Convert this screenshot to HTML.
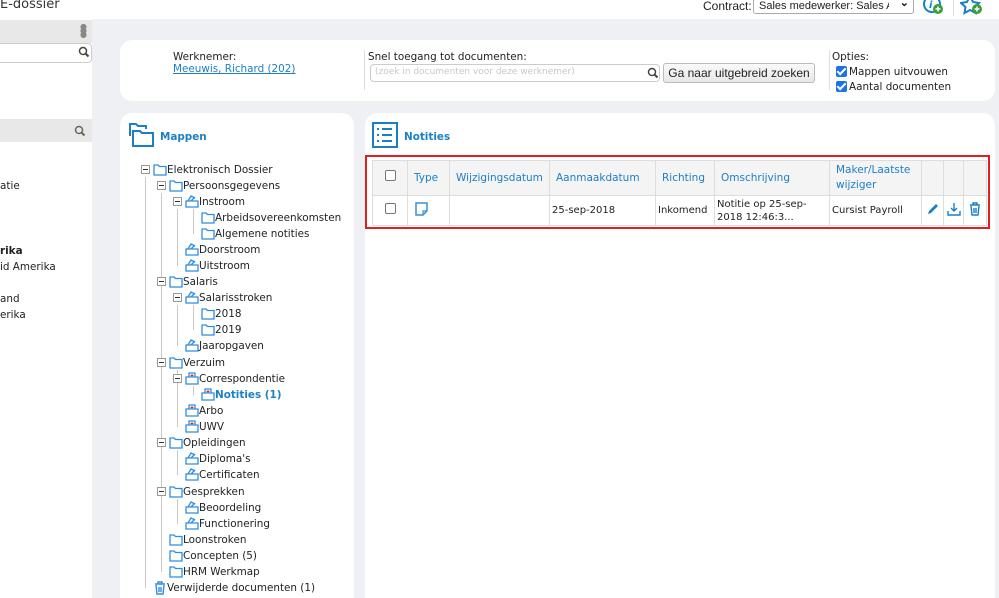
<!DOCTYPE html><html><head><meta charset="utf-8"><style>
*{margin:0;padding:0;box-sizing:border-box}
html,body{width:999px;height:598px;overflow:hidden}
body{background:#eef0f3;font-family:"DejaVu Sans",Verdana,sans-serif;font-size:10.4px;color:#222;position:relative}
.a{position:absolute;white-space:nowrap}
.top{left:0;top:0;width:999px;height:19px;background:#fff}
.side{left:0;top:19px;width:92px;height:579px;background:#fff}
.panel{background:#fff;border-radius:12px}
.t{position:absolute;white-space:nowrap;line-height:14px;margin-top:1px}
.tl{position:absolute;background:#c8c8c8}
.pm{position:absolute;width:9px;height:9px;border:1px solid #999;background:#fff}
.pm:after{content:"";position:absolute;left:1px;top:3px;width:5px;height:1px;background:#333}
table{border-collapse:collapse;table-layout:fixed}
td,th{border:1px solid #ddd;font-weight:normal;overflow:hidden}
th{color:#1b7fc6;background:#f4f4f4;font-size:10.5px;text-align:left;padding:0 6px;line-height:15px}
td{font-size:10px;padding:0 2px;line-height:13px}
.cb{display:inline-block;width:11px;height:11px;border:1px solid #777;border-radius:2px;background:#fff}
.ck{position:absolute;width:11px;height:11px;background:#1a73e8;border-radius:2px}
.ck:after{content:"";position:absolute;left:3px;top:0px;width:3px;height:7px;border:solid #fff;border-width:0 2px 2px 0;transform:rotate(45deg)}
</style></head><body>
<div class="a top"></div>
<div class="a" style="left:0;top:-3px;font-size:13px;color:#333">E-dossier</div>
<div class="a" style="left:703px;top:-1px;font-family:'Liberation Sans',sans-serif;font-size:12px">Contract:</div>
<div class="a" style="left:753px;top:-6px;width:161px;height:20px;border:1px solid #aaa;border-radius:3px;background:#fff;font-family:'Liberation Sans',sans-serif;font-size:11px;padding:5px 5px;overflow:hidden"><span style="display:inline-block;width:130px;overflow:hidden">Sales medewerker: Sales Azië &amp;</span><span style="position:absolute;right:4px;top:1px;font-weight:bold;background:#fff">&#8964;</span></div>
<svg class="a" style="left:922px;top:-4px" width="22" height="20"><circle cx="10" cy="8" r="8" fill="none" stroke="#1b7fc6" stroke-width="2"/><text x="7" y="12" font-size="10" font-style="italic" font-weight="bold" fill="#1b7fc6">i</text><circle cx="16" cy="13" r="5" fill="#3a9d3a"/><path d="M13.5 13h5M16 10.5v5" stroke="#fff" stroke-width="1.5"/></svg>
<div class="a" style="left:953px;top:0;width:1px;height:16px;background:#ddd"></div>
<svg class="a" style="left:960px;top:-4px" width="24" height="20"><path d="M10 0l3 6 6 1-4.5 4 1 6-5.5-3-5.5 3 1-6L1 7l6-1z" fill="none" stroke="#1b7fc6" stroke-width="2"/><circle cx="17" cy="13" r="5" fill="#3a9d3a"/><path d="M14.5 13h5M17 10.5v5" stroke="#fff" stroke-width="1.5"/></svg>

<div class="a side"></div>
<div class="a" style="left:0;top:20px;width:92px;height:23px;background:#e8e8e8"></div>
<div class="a" style="left:80px;top:25px;color:#888;font-size:8px;line-height:4px">●<br>●<br>●</div>
<div class="a" style="left:-5px;top:43px;width:97px;height:20px;border:1px solid #ccc;border-radius:4px;background:#fff"></div>
<svg class="a" style="left:78px;top:46px" width="12" height="12"><circle cx="5" cy="5" r="3.5" fill="none" stroke="#444" stroke-width="1.5"/><path d="M7.5 7.5l3 3" stroke="#444" stroke-width="2"/></svg>
<div class="a" style="left:0;top:119px;width:92px;height:23px;background:#e8e8e8"></div>
<svg class="a" style="left:74px;top:125px" width="12" height="12"><circle cx="5" cy="5" r="3.5" fill="none" stroke="#666" stroke-width="1.5"/><path d="M7.5 7.5l3 3" stroke="#666" stroke-width="2"/></svg>
<div class="t" style="left:0;top:178px">atie</div>
<div class="t" style="left:0;top:243px;font-weight:bold">rika</div>
<div class="t" style="left:0;top:259px">id Amerika</div>
<div class="t" style="left:0;top:291px">and</div>
<div class="t" style="left:0;top:307px">erika</div>

<div class="a panel" style="left:120px;top:40px;width:875px;height:61px"></div>
<div class="t" style="left:173px;top:49px">Werknemer:</div>
<div class="t" style="left:173px;top:61px;color:#1b7fc6;text-decoration:underline">Meeuwis, Richard (202)</div>
<div class="a" style="left:364px;top:50px;width:1px;height:40px;background:#ddd"></div>
<div class="t" style="left:368px;top:49px">Snel toegang tot documenten:</div>
<div class="a" style="left:370px;top:64px;width:290px;height:18px;border:1px solid #ccc;border-radius:4px;background:#fff;color:#c8c8c8;font-size:9px;padding:2px 4px">(zoek in documenten voor deze werknemer)</div>
<svg class="a" style="left:647px;top:67px" width="12" height="12"><circle cx="5" cy="5" r="3.5" fill="none" stroke="#444" stroke-width="1.5"/><path d="M7.5 7.5l3 3" stroke="#444" stroke-width="2"/></svg>
<div class="a" style="left:663px;top:63px;width:152px;height:20px;border:1px solid #bbb;border-radius:3px;background:linear-gradient(#fafafa,#e8e8e8);font-family:'Liberation Sans',sans-serif;font-size:12px;text-align:center;line-height:18px">Ga naar uitgebreid zoeken</div>
<div class="a" style="left:829px;top:50px;width:1px;height:40px;background:#ddd"></div>
<div class="t" style="left:832px;top:49px">Opties:</div>
<div class="ck" style="left:836px;top:66px"></div><div class="t" style="left:849px;top:64px">Mappen uitvouwen</div>
<div class="ck" style="left:836px;top:81px"></div><div class="t" style="left:849px;top:79px">Aantal documenten</div>

<div class="a panel" style="left:120px;top:113px;width:234px;height:485px;border-bottom-left-radius:0;border-bottom-right-radius:0"></div>
<svg class="a" style="left:129px;top:122px" width="26" height="26"><path d="M1 14V2h6l2 2h8v3" fill="none" stroke="#1b7fc6" stroke-width="2"/><path d="M4 24V9h7l2 2h11v13z" fill="none" stroke="#1b7fc6" stroke-width="2"/></svg>
<div class="t" style="left:160px;top:129px;color:#1b7fc6;font-weight:bold">Mappen</div>

<div class="a panel" style="left:365px;top:113px;width:630px;height:485px;border-bottom-left-radius:0;border-bottom-right-radius:0"></div>
<svg class="a" style="left:372px;top:122px" width="26" height="26"><rect x="1" y="1" width="24" height="24" fill="none" stroke="#1b7fc6" stroke-width="2"/><path d="M10 7h10M10 13h10M10 19h10" stroke="#1b7fc6" stroke-width="2"/><path d="M5 7h2M5 13h2M5 19h2" stroke="#1b7fc6" stroke-width="2"/></svg>
<div class="t" style="left:404px;top:129px;color:#1b7fc6;font-weight:bold">Notities</div>

<div class="a" style="left:365px;top:155px;width:625px;height:74px;border:2px solid #e02020"></div>
<table class="a" style="left:372px;top:160px;width:614px;height:66px">
<colgroup><col style="width:35px"><col style="width:42px"><col style="width:100px"><col style="width:106px"><col style="width:59px"><col style="width:115px"><col style="width:92px"><col style="width:22px"><col style="width:20px"><col style="width:23px"></colgroup>
<tr style="height:35px"><th style="text-align:center;padding:0"><span class="cb"></span></th><th>Type</th><th>Wijzigingsdatum</th><th>Aanmaakdatum</th><th>Richting</th><th>Omschrijving</th><th style="white-space:normal">Maker/Laatste wijziger</th><th></th><th></th><th></th></tr>
<tr><td style="text-align:center"><span class="cb"></span></td><td style="padding-left:7px"><svg width="13" height="14"><path d="M1 1h11v8l-4 4H1z" fill="none" stroke="#3a8fd6" stroke-width="1.5"/><path d="M8 13V9h4" fill="none" stroke="#3a8fd6" stroke-width="1.2"/></svg></td><td></td><td>25-sep-2018</td><td>Inkomend</td><td style="white-space:normal">Notitie op 25-sep-2018 12:46:3...</td><td>Cursist Payroll</td>
<td style="text-align:center"><svg width="12" height="12"><path d="M1 11l1-3 7-7 2 2-7 7z" fill="#1b7fc6"/></svg></td>
<td style="text-align:center"><svg width="14" height="14"><path d="M7 1v8M4 6l3 3 3-3M1 9v4h12V9" fill="none" stroke="#1b7fc6" stroke-width="1.4"/></svg></td>
<td style="text-align:center"><svg width="14" height="14"><path d="M2 3h10M5 3V1h4v2M3 4l1 9h6l1-9M6 6v5M8 6v5" fill="none" stroke="#1b7fc6" stroke-width="1.4"/></svg></td></tr>
</table>

<div class="tl" style="left:145px;top:177px;width:1px;height:411px"></div>
<div class="tl" style="left:161px;top:193px;width:1px;height:379px"></div>
<div class="tl" style="left:177px;top:209px;width:1px;height:57px"></div>
<div class="tl" style="left:193px;top:209px;width:1px;height:25px"></div>
<div class="tl" style="left:177px;top:305px;width:1px;height:41px"></div>
<div class="tl" style="left:193px;top:305px;width:1px;height:25px"></div>
<div class="tl" style="left:177px;top:370px;width:1px;height:57px"></div>
<div class="tl" style="left:193px;top:386px;width:1px;height:9px"></div>
<div class="tl" style="left:177px;top:450px;width:1px;height:25px"></div>
<div class="tl" style="left:177px;top:499px;width:1px;height:25px"></div>

<div class="pm" style="left:141px;top:165px"></div>
<svg class="a" style="left:153px;top:163px" width="14" height="13"><path d="M1 12V2h4l1.5 1.5H13V12z" fill="#fff" stroke="#2f8de0" stroke-width="1.3"/></svg>
<div class="t" style="left:167px;top:162px">Elektronisch Dossier</div>

<div class="pm" style="left:157px;top:181px"></div>
<svg class="a" style="left:169px;top:179px" width="14" height="13"><path d="M1 12V2h4l1.5 1.5H13V12z" fill="#fff" stroke="#2f8de0" stroke-width="1.3"/></svg>
<div class="t" style="left:183px;top:178px">Persoonsgegevens</div>

<div class="pm" style="left:173px;top:197px"></div>
<svg class="a" style="left:185px;top:195px" width="14" height="13"><path d="M1 12V6h12v6zM3 6l3-5 4 2M6 6l4-4" fill="#fff" stroke="#2f8de0" stroke-width="1.3"/></svg>
<div class="t" style="left:199px;top:194px">Instroom</div>

<svg class="a" style="left:201px;top:211px" width="14" height="13"><path d="M1 12V2h4l1.5 1.5H13V12z" fill="#fff" stroke="#2f8de0" stroke-width="1.3"/></svg>
<div class="t" style="left:215px;top:210px;width:130px;overflow:hidden">Arbeidsovereenkomsten (2</div>
<svg class="a" style="left:201px;top:227px" width="14" height="13"><path d="M1 12V2h4l1.5 1.5H13V12z" fill="#fff" stroke="#2f8de0" stroke-width="1.3"/></svg>
<div class="t" style="left:215px;top:226px">Algemene notities</div>

<svg class="a" style="left:185px;top:243px" width="14" height="13"><path d="M1 12V6h12v6zM3 6l3-5 4 2M6 6l4-4" fill="#fff" stroke="#2f8de0" stroke-width="1.3"/></svg>
<div class="t" style="left:199px;top:242px">Doorstroom</div>
<svg class="a" style="left:185px;top:259px" width="14" height="13"><path d="M1 12V6h12v6zM3 6l3-5 4 2M6 6l4-4" fill="#fff" stroke="#2f8de0" stroke-width="1.3"/></svg>
<div class="t" style="left:199px;top:258px">Uitstroom</div>

<div class="pm" style="left:157px;top:277px"></div>
<svg class="a" style="left:169px;top:275px" width="14" height="13"><path d="M1 12V2h4l1.5 1.5H13V12z" fill="#fff" stroke="#2f8de0" stroke-width="1.3"/></svg>
<div class="t" style="left:183px;top:274px">Salaris</div>
<div class="pm" style="left:173px;top:293px"></div>
<svg class="a" style="left:185px;top:291px" width="14" height="13"><path d="M1 12V6h12v6zM3 6l3-5 4 2M6 6l4-4" fill="#fff" stroke="#2f8de0" stroke-width="1.3"/></svg>
<div class="t" style="left:199px;top:290px">Salarisstroken</div>
<svg class="a" style="left:201px;top:307px" width="14" height="13"><path d="M1 12V2h4l1.5 1.5H13V12z" fill="#fff" stroke="#2f8de0" stroke-width="1.3"/></svg>
<div class="t" style="left:215px;top:306px">2018</div>
<svg class="a" style="left:201px;top:323px" width="14" height="13"><path d="M1 12V2h4l1.5 1.5H13V12z" fill="#fff" stroke="#2f8de0" stroke-width="1.3"/></svg>
<div class="t" style="left:215px;top:322px">2019</div>
<svg class="a" style="left:185px;top:339px" width="14" height="13"><path d="M1 12V6h12v6zM3 6l3-5 4 2M6 6l4-4" fill="#fff" stroke="#2f8de0" stroke-width="1.3"/></svg>
<div class="t" style="left:199px;top:338px">Jaaropgaven</div>

<div class="pm" style="left:157px;top:358px"></div>
<svg class="a" style="left:169px;top:356px" width="14" height="13"><path d="M1 12V2h4l1.5 1.5H13V12z" fill="#fff" stroke="#2f8de0" stroke-width="1.3"/></svg>
<div class="t" style="left:183px;top:355px">Verzuim</div>
<div class="pm" style="left:173px;top:374px"></div>
<svg class="a" style="left:185px;top:372px" width="14" height="13"><path d="M1 12V5h12v7zM4 5V1h6v4" fill="#fff" stroke="#2f8de0" stroke-width="1.3"/><path d="M7 2v3M5.5 3.5h3" stroke="#e03030" stroke-width="1"/></svg>
<div class="t" style="left:199px;top:371px">Correspondentie</div>
<svg class="a" style="left:201px;top:388px" width="14" height="13"><path d="M1 12V5h12v7zM4 5V1h6v4" fill="#fff" stroke="#2f8de0" stroke-width="1.3"/><path d="M7 2v3M5.5 3.5h3" stroke="#e03030" stroke-width="1"/></svg>
<div class="t" style="left:215px;top:387px;color:#1b7fc6;font-weight:bold">Notities (1)</div>
<svg class="a" style="left:185px;top:404px" width="14" height="13"><path d="M1 12V5h12v7zM4 5V1h6v4" fill="#fff" stroke="#2f8de0" stroke-width="1.3"/><path d="M7 2v3M5.5 3.5h3" stroke="#e03030" stroke-width="1"/></svg>
<div class="t" style="left:199px;top:403px">Arbo</div>
<svg class="a" style="left:185px;top:420px" width="14" height="13"><path d="M1 12V5h12v7zM4 5V1h6v4" fill="#fff" stroke="#2f8de0" stroke-width="1.3"/><path d="M7 2v3M5.5 3.5h3" stroke="#e03030" stroke-width="1"/></svg>
<div class="t" style="left:199px;top:419px">UWV</div>

<div class="pm" style="left:157px;top:438px"></div>
<svg class="a" style="left:169px;top:436px" width="14" height="13"><path d="M1 12V2h4l1.5 1.5H13V12z" fill="#fff" stroke="#2f8de0" stroke-width="1.3"/></svg>
<div class="t" style="left:183px;top:435px">Opleidingen</div>
<svg class="a" style="left:185px;top:452px" width="14" height="13"><path d="M1 12V6h12v6zM3 6l3-5 4 2M6 6l4-4" fill="#fff" stroke="#2f8de0" stroke-width="1.3"/></svg>
<div class="t" style="left:199px;top:451px">Diploma's</div>
<svg class="a" style="left:185px;top:468px" width="14" height="13"><path d="M1 12V6h12v6zM3 6l3-5 4 2M6 6l4-4" fill="#fff" stroke="#2f8de0" stroke-width="1.3"/></svg>
<div class="t" style="left:199px;top:467px">Certificaten</div>

<div class="pm" style="left:157px;top:487px"></div>
<svg class="a" style="left:169px;top:485px" width="14" height="13"><path d="M1 12V2h4l1.5 1.5H13V12z" fill="#fff" stroke="#2f8de0" stroke-width="1.3"/></svg>
<div class="t" style="left:183px;top:484px">Gesprekken</div>
<svg class="a" style="left:185px;top:501px" width="14" height="13"><path d="M1 12V6h12v6zM3 6l3-5 4 2M6 6l4-4" fill="#fff" stroke="#2f8de0" stroke-width="1.3"/></svg>
<div class="t" style="left:199px;top:500px">Beoordeling</div>
<svg class="a" style="left:185px;top:517px" width="14" height="13"><path d="M1 12V6h12v6zM3 6l3-5 4 2M6 6l4-4" fill="#fff" stroke="#2f8de0" stroke-width="1.3"/></svg>
<div class="t" style="left:199px;top:516px">Functionering</div>

<svg class="a" style="left:169px;top:533px" width="14" height="13"><path d="M1 12V2h4l1.5 1.5H13V12z" fill="#fff" stroke="#2f8de0" stroke-width="1.3"/></svg>
<div class="t" style="left:183px;top:532px">Loonstroken</div>
<svg class="a" style="left:169px;top:549px" width="14" height="13"><path d="M1 12V2h4l1.5 1.5H13V12z" fill="#fff" stroke="#2f8de0" stroke-width="1.3"/></svg>
<div class="t" style="left:183px;top:548px">Concepten (5)</div>
<svg class="a" style="left:169px;top:565px" width="14" height="13"><path d="M1 12V2h4l1.5 1.5H13V12z" fill="#fff" stroke="#2f8de0" stroke-width="1.3"/></svg>
<div class="t" style="left:183px;top:564px">HRM Werkmap</div>

<svg class="a" style="left:153px;top:581px" width="14" height="14"><path d="M2 3h10M5 3V1h4v2M3 4l1 9h6l1-9M6 6v5M8 6v5" fill="none" stroke="#2f8de0" stroke-width="1.4"/></svg>
<div class="t" style="left:167px;top:580px">Verwijderde documenten (1)</div>
</body></html>
